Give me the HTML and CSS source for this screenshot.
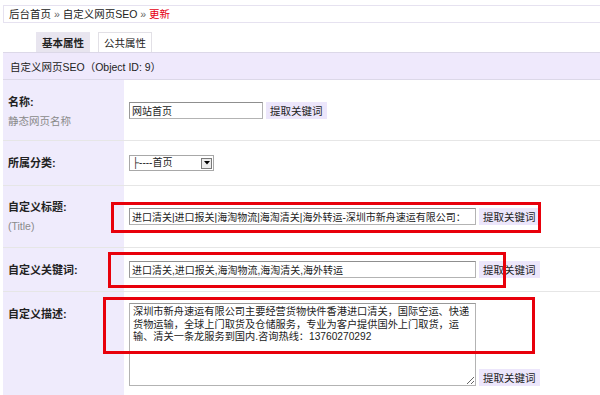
FILE: index.html
```html
<!DOCTYPE html>
<html lang="zh-CN">
<head>
<meta charset="utf-8">
<title>自定义网页SEO</title>
<link rel="stylesheet" href="styles.css">
</head>
<body>
<div class="crumb">后台首页 <span class="sep">»</span> 自定义网页SEO <span class="sep">»</span> <span class="cur">更新</span></div>
<div class="tabs"><span class="tab active">基本属性</span><span class="tab">公共属性</span></div>
<div class="head">自定义网页SEO（Object ID: 9）</div>
<div class="form">
  <div class="row r1">
    <div class="lbl"><b>名称:</b><span class="sub">静态网页名称</span></div>
    <div class="fld"><input class="inp short" value="网站首页"><button class="btn">提取关键词</button></div>
  </div>
  <div class="row r2">
    <div class="lbl"><b>所属分类:</b></div>
    <div class="fld"><div class="select"><span class="sel-text">├----首页</span><span class="sel-arrow"><svg width="6" height="4" viewBox="0 0 6 4"><path d="M0 0H6L3 3.5Z" fill="#000"/></svg></span></div></div>
  </div>
  <div class="row r3">
    <div class="lbl"><b>自定义标题:</b><span class="sub">(Title)</span></div>
    <div class="fld"><input class="inp long" value="进口清关|进口报关|海淘物流|海淘清关|海外转运-深圳市新舟速运有限公司："><button class="btn">提取关键词</button></div>
  </div>
  <div class="row r4">
    <div class="lbl"><b>自定义关键词:</b></div>
    <div class="fld"><input class="inp long" value="进口清关,进口报关,海淘物流,海淘清关,海外转运"><button class="btn">提取关键词</button></div>
  </div>
  <div class="row r5">
    <div class="lbl top"><b>自定义描述:</b></div>
    <div class="fld bottom"><textarea class="ta">深圳市新舟速运有限公司主要经营货物快件香港进口清关，国际空运、快递
货物运输，全球上门取货及仓储服务，专业为客户提供国外上门取货，运
输、清关一条龙服务到国内.咨询热线：13760270292</textarea><button class="btn">提取关键词</button></div>
  </div>
</div>
<div class="mark m1"></div>
<div class="mark m2"></div>
<div class="mark m3"></div>
</body>
</html>
```
FILE: styles.css
```css
html, body {
  margin: 0;
  overflow: hidden;
}
body {
  position: relative;
  width: 600px;
  height: 395px;
  padding: 5px 0 0 3px;
  box-sizing: border-box;
  background: #fff;
  font-family: "Liberation Sans", "Noto Sans CJK SC", sans-serif;
  font-size: 10.5px;
  color: #222;
}
.crumb {
  height: 18px;
  box-sizing: border-box;
  border: 1px solid #e6e2f0;
  border-right: none;
  line-height: 16px;
  padding-left: 5px;
  color: #222;
}
.crumb .sep { color: #666; }
.crumb .cur { color: #e60012; }
.tabs {
  display: flex;
  margin-top: 9px;
  padding-left: 33px;
  gap: 8px;
  height: 20px;
}
.tab {
  display: flex;
  align-items: center;
  height: 20px;
  box-sizing: border-box;
  padding: 0 5px;
  border: 1px solid #e2e0e6;
  border-bottom: none;
  background: #fff;
  font-size: 10.5px;
}
.tab.active {
  background: #e8e5ef;
  border-color: #e8e5ef;
  font-weight: bold;
}
.head {
  height: 28px;
  box-sizing: border-box;
  border-top: 1px solid #dcd8e8;
  border-bottom: 1px solid #dcd8e8;
  background: #efe9fc;
  display: flex;
  align-items: center;
  padding-left: 7px;
}
.row {
  display: grid;
  grid-template-columns: 121px 1fr;
  box-sizing: border-box;
  border-bottom: 1px solid #e6e6e6;
}
.r1 { height: 61px; }
.r2 { height: 45px; }
.r3 { height: 62px; }
.r4 { height: 44px; }
.r5 { height: 110px; border-bottom: none; }
.lbl {
  background: #efebfc;
  display: flex;
  flex-direction: column;
  justify-content: center;
  padding-left: 5px;
}
.lbl.top { justify-content: flex-start; padding-top: 14px; }
.lbl b {
  font-size: 11px;
  line-height: 16px;
  font-weight: bold;
  color: #222;
}
.lbl .sub {
  color: #8a8a8a;
  line-height: 16px;
  margin-top: 3px;
}
.r1 .lbl { padding-top: 3px; }
.fld {
  display: flex;
  align-items: center;
  gap: 3px;
  padding-left: 5px;
}
.fld.bottom {
  align-items: flex-end;
  padding-bottom: 8px;
  padding-top: 11px;
  align-self: start;
}
.inp {
  height: 17px;
  box-sizing: border-box;
  border: 1px solid #b3b3b3;
  border-top-color: #8f8f8f;
  border-left-color: #9a9a9a;
  padding: 0 2px;
  font-family: "Liberation Sans", "Noto Sans CJK SC", sans-serif;
  font-size: 10px;
  color: #222;
  outline: none;
}
.inp.short { width: 134px; }
.inp.long { width: 347px; }
.btn {
  height: 17px;
  box-sizing: border-box;
  border: none;
  background: #ece6fb;
  padding: 0 4px;
  font-family: "Liberation Sans", "Noto Sans CJK SC", sans-serif;
  font-size: 10.5px;
  color: #222;
}
.select {
  width: 85px;
  height: 16px;
  box-sizing: border-box;
  border: 1px solid #a8a8a8;
  display: flex;
  align-items: center;
  justify-content: space-between;
  padding: 0 1px 0 2px;
  background: #fff;
}
.sel-text { font-size: 10px; line-height: 14px; white-space: nowrap; }
.sel-arrow {
  width: 11px;
  height: 11px;
  box-sizing: border-box;
  border: 1px solid #7a7a7a;
  background: #ececec;
  display: flex;
  align-items: center;
  justify-content: center;
}
.ta {
  width: 347px;
  height: 83px;
  box-sizing: border-box;
  border: 1px solid #b3b3b3;
  border-top-color: #999;
  padding: 2px 3px;
  margin: 0;
  font-family: "Liberation Sans", "Noto Sans CJK SC", sans-serif;
  font-size: 10.2px;
  line-height: 12.5px;
  color: #222;
  white-space: pre;
  overflow: hidden;
  outline: none;
}
.mark {
  position: absolute;
  box-sizing: border-box;
  border: 3px solid #e8000b;
  pointer-events: none;
}
.m1 { left: 111px; top: 202px; width: 430px; height: 31px; }
.m2 { left: 108px; top: 252px; width: 398px; height: 36px; }
.m3 { left: 103px; top: 297px; width: 432px; height: 57px; }
```
